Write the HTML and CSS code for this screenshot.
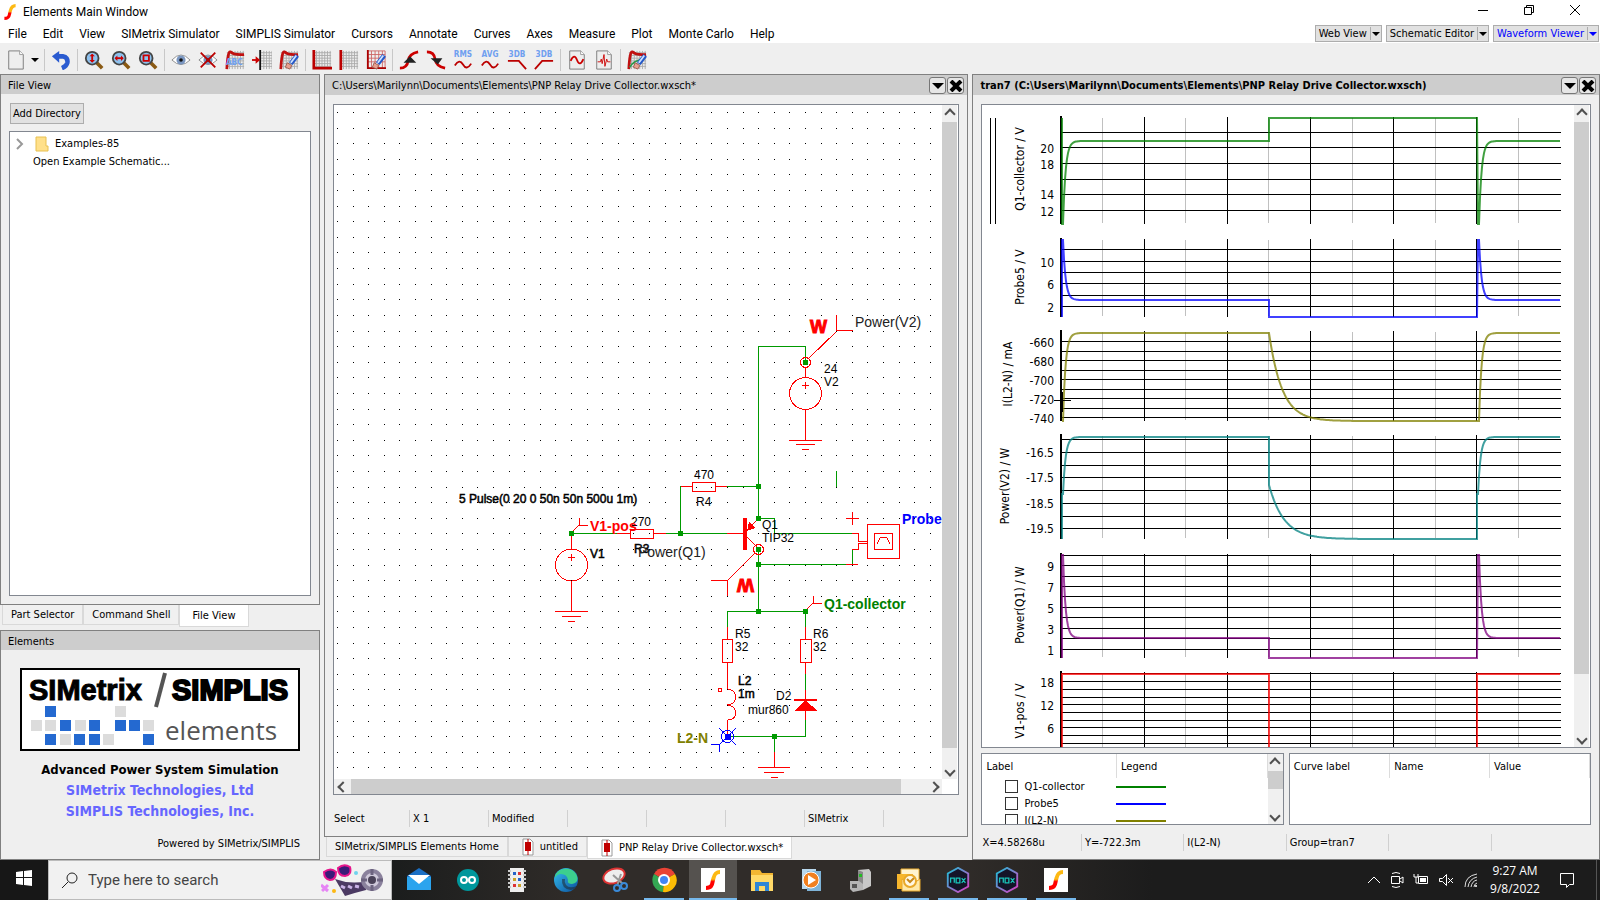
FILE: index.html
```html
<!DOCTYPE html>
<html lang="en">
<head>
    <meta charset="utf-8">
    <title>Elements Main Window</title>
    <link rel="stylesheet" href="styles.css">
</head>
<body>
    <svg class="defs" width="0" height="0" aria-hidden="true">
        <defs>
            <linearGradient id="flame" x1="0" y1="0" x2="0" y2="1">
                <stop offset="0.45" stop-color="#fdb913"/>
                <stop offset="0.6" stop-color="#f00"/>
            </linearGradient>
            <linearGradient id="edge-blue" x1="0" y1="0" x2="1" y2="1">
                <stop offset="0" stop-color="#35c1f1"/>
                <stop offset="1" stop-color="#0b4f9c"/>
            </linearGradient>
            <linearGradient id="nox-line" x1="0" y1="0" x2="1" y2="1">
                <stop offset="0" stop-color="#19c3d8"/>
                <stop offset="1" stop-color="#e23cc3"/>
            </linearGradient>
            <symbol id="swoosh" viewBox="0 0 20 20">
                <path d="M3 18C10 18 9 13 10 10S11 2 17 2" fill="none" stroke="url(#flame)" stroke-width="4"/>
            </symbol>
            <symbol id="page" viewBox="0 0 22 22">
                <path d="M3 1h12l4 4v16H3z" fill="#eee" stroke="#777"/>
                <path d="M15 1v4h4" fill="#fff" stroke="#999"/>
            </symbol>
            <symbol id="lens" viewBox="0 0 22 22">
                <path d="M14 14l6 6" stroke="#8a5a14" stroke-width="4"/>
                <circle cx="9" cy="9" r="7" fill="#8ec2ee" stroke="#444" stroke-width="2"/>
            </symbol>
            <symbol id="mesh" viewBox="0 0 22 22">
                <path d="M2 3h19M2 6h19M2 9h19M2 12h19M2 15h19M2 18h19M5 1v20M8 1v20M11 1v20M14 1v20M17 1v20M20 1v20" stroke="#aaa" fill="none"/>
            </symbol>
            <symbol id="eraser" viewBox="0 0 22 22">
                <path d="M20 6l-7 9" stroke="#2458c8" stroke-width="5"/>
                <path d="M19 6l-6 8" stroke="#cfe2ff" stroke-width="2"/>
                <path d="M9 14l5 3-2 4-5-2z" fill="#e8a090" stroke="#9b5a4c"/>
            </symbol>
            <symbol id="eye" viewBox="0 0 22 22">
                <path d="M1 11Q11 0 21 11Q11 21 1 11z" fill="#fff" stroke="#888"/>
                <circle cx="11" cy="11" r="5" fill="#7a96c0"/>
                <circle cx="11" cy="11" r="2" fill="#111"/>
            </symbol>
            <symbol id="doc" viewBox="0 0 12 18">
                <path d="M1 1h7l3 3v13H1z" fill="#fff" stroke="#999"/>
                <path d="M6 1v16" stroke="#c00000"/>
                <path d="M3 4h6v9H3z" fill="#c00000"/>
            </symbol>
            <symbol id="nox" viewBox="0 0 26 28">
                <path d="M13 1l11 6v14l-11 6-11-6V7z" fill="#141428" stroke="url(#nox-line)" stroke-width="2"/>
                <path d="M5 17v-5h4v5M11 12h4v5h-4zM17 12l4 5M21 12l-4 5" fill="none" stroke="#19c3b8" stroke-width="1.4"/>
            </symbol>
        </defs>
    </svg>

    <header class="titlebar">
        <svg class="app-icon"><use href="#swoosh"/></svg>
        <h1>Elements Main Window</h1>
        <div class="window-buttons">
            <button aria-label="Minimize"><svg width="12" height="12"><path d="M1 6.5h10" stroke="#000"/></svg></button>
            <button aria-label="Restore"><svg width="12" height="12"><path d="M1.5 3.5h7v7h-7zM3.5 3V1.5h7v7H9" fill="none" stroke="#000"/></svg></button>
            <button aria-label="Close"><svg width="12" height="12"><path d="M1 1l10 10M11 1L1 11" stroke="#000"/></svg></button>
        </div>
    </header>

    <nav class="menubar">
        <button>File</button><button>Edit</button><button>View</button><button>SIMetrix Simulator</button><button>SIMPLIS Simulator</button><button>Cursors</button><button>Annotate</button><button>Curves</button><button>Axes</button><button>Measure</button><button>Plot</button><button>Monte Carlo</button><button>Help</button>
        <div class="modes">
            <button class="mode">Web View<i></i></button>
            <button class="mode">Schematic Editor<i></i></button>
            <button class="mode current">Waveform Viewer<i></i></button>
        </div>
    </nav>

    <div class="toolbar">
        <button aria-label="New"><svg><use href="#page"/></svg></button>
        <button class="more" aria-label="New options"><i></i></button>
        <hr>
        <button aria-label="Undo"><svg viewBox="0 0 22 22"><path d="M7 7h6q6 1 5 7q-1 4-6 6" fill="none" stroke="#2a5bd0" stroke-width="5"/><path d="M1 7l8-6v13z" fill="#2a5bd0"/></svg></button>
        <hr>
        <button aria-label="Zoom vertical"><svg viewBox="0 0 22 22"><use href="#lens"/><path d="M9 5v8" stroke="#c00" stroke-width="2"/><path d="M6 7l3-3 3 3zM6 11l3 3 3-3z" fill="#c00"/></svg></button>
        <button aria-label="Zoom horizontal"><svg viewBox="0 0 22 22"><use href="#lens"/><path d="M5 9h8" stroke="#c00" stroke-width="2"/><path d="M7 6l-3 3 3 3zM11 6l3 3-3 3z" fill="#c00"/></svg></button>
        <button aria-label="Zoom box"><svg viewBox="0 0 22 22"><use href="#lens"/><path d="M6 6h6v6H6z" fill="none" stroke="#c00" stroke-width="2"/></svg></button>
        <hr>
        <button aria-label="Show curve"><svg><use href="#eye"/></svg></button>
        <button aria-label="Hide curve"><svg viewBox="0 0 22 22"><use href="#eye"/><path d="M3 3l16 16M19 3L3 19" stroke="#b00" stroke-width="2"/></svg></button>
        <button aria-label="Name curve"><svg viewBox="0 0 22 22"><use href="#mesh"/><path d="M2 21Q3 1 6 2Q10 6 21 5" fill="none" stroke="#c01010" stroke-width="3"/><text class="abc" x="1" y="17">ABC</text></svg></button>
        <button aria-label="Move axis"><svg viewBox="0 0 22 22"><g transform="translate(8 0)"><use href="#mesh" width="22" height="22"/></g><path d="M9 0v22" stroke="#111" stroke-width="2"/><path d="M0 11h5" stroke="#c00" stroke-width="2"/><path d="M4 7l5 4-5 4z" fill="#c00"/></svg></button>
        <button aria-label="Erase curve"><svg viewBox="0 0 22 22"><use href="#mesh"/><path d="M2 21Q3 1 6 2Q10 6 21 5" fill="none" stroke="#c01010" stroke-width="3"/><use href="#eraser"/></svg></button>
        <hr>
        <button aria-label="New axis"><svg viewBox="0 0 22 22"><use href="#mesh"/><path d="M2 0v20h20" fill="none" stroke="#b00" stroke-width="3"/></svg></button>
        <button aria-label="New grid"><svg viewBox="0 0 22 22"><use href="#mesh"/><path d="M2 0v22" stroke="#b00" stroke-width="3"/></svg></button>
        <button aria-label="Erase axis"><svg viewBox="0 0 22 22"><path d="M2 1h19v19H2zM2 5h19M2 9h19M2 13h19M6 1v19M10 1v19M14 1v19M18 1v19" fill="none" stroke="#c66"/><path d="M2 0v20h20" fill="none" stroke="#a00" stroke-width="2"/><use href="#eraser"/></svg></button>
        <hr>
        <button aria-label="Rise time"><svg viewBox="0 0 22 22"><path d="M1 20q8 0 9-8t11-10" fill="none" stroke="#c00" stroke-width="3"/><path d="M5 14h14l-7-7z" fill="#222"/></svg></button>
        <button aria-label="Fall time"><svg viewBox="0 0 22 22"><path d="M1 2q8 0 9 8t11 10" fill="none" stroke="#c00" stroke-width="3"/><path d="M5 9h13l-5 7z" fill="#222"/></svg></button>
        <button aria-label="RMS"><svg viewBox="0 0 22 22"><text class="stat" x="11" y="8">RMS</text><path d="M2 17q5-8 9-1t9-1" fill="none" stroke="#b00" stroke-width="2"/></svg></button>
        <button aria-label="Average"><svg viewBox="0 0 22 22"><text class="stat" x="11" y="8">AVG</text><path d="M2 17q5-8 9-1t9-1" fill="none" stroke="#b00" stroke-width="2"/></svg></button>
        <button aria-label="Low pass 3dB"><svg viewBox="0 0 22 22"><text class="stat" x="11" y="8">3DB</text><path d="M1 12h12l8 9" fill="none" stroke="#b00" stroke-width="2"/></svg></button>
        <button aria-label="High pass 3dB"><svg viewBox="0 0 22 22"><text class="stat" x="11" y="8">3DB</text><path d="M1 21l8-9h12" fill="none" stroke="#b00" stroke-width="2"/></svg></button>
        <hr>
        <button aria-label="Transient plot"><svg viewBox="0 0 22 22"><use href="#page"/><path d="M4 12q4-9 7-1t7-1" fill="none" stroke="#c00" stroke-width="2"/></svg></button>
        <button aria-label="Spectrum plot"><svg viewBox="0 0 22 22"><use href="#page"/><path d="M4 13h3l1-3 1 5 2-10 1 13 2-8 1 3h3" fill="none" stroke="#c00"/></svg></button>
        <hr>
        <button aria-label="Erase all"><svg viewBox="0 0 22 22"><use href="#mesh"/><path d="M2 21Q3 1 6 2Q10 6 21 5" fill="none" stroke="#c01010" stroke-width="3"/><path d="M3 19q4-8 16-9" fill="none" stroke="#2a9a4a" stroke-width="2"/><use href="#eraser"/></svg></button>
    </div>

    <main class="workspace">
        <aside class="dock">
            <section class="panel files">
                <h2 class="panel-head">File View</h2>
                <div class="panel-body">
                    <button class="add">Add Directory</button>
                    <ul class="tree">
                        <li><svg width="8" height="12"><path d="M1 1l5 5-5 5" fill="none" stroke="#999" stroke-width="2"/></svg><svg class="folder" width="14" height="16"><path d="M1 1h10v9h2v5H1z" fill="#ffe08a" stroke="#e8c050"/></svg>Examples-85</li>
                        <li class="leaf">Open Example Schematic...</li>
                    </ul>
                </div>
            </section>
            <div class="tabs">
                <button>Part Selector</button><button>Command Shell</button><button class="active">File View</button>
            </div>
            <section class="panel about">
                <h2 class="panel-head">Elements</h2>
                <div class="about-body">
                    <svg class="logo" viewBox="0 0 280 83">
                        <path d="M1 1h278v81H1z" fill="#fff" stroke="#000" stroke-width="2"/>
                        <text class="brand" x="9" y="32">SIMetrix</text>
                        <path d="M136 39l9-34" stroke="#555" stroke-width="4"/>
                        <text class="brand heavy" x="152" y="32">SIMPLIS</text>
                        <path class="tile" d="M95 38h11v11h-11zM11 52h11v11h-11zM25 52h11v11h-11zM55 52h11v11h-11zM123 52h11v11h-11zM40 66h11v11h-11zM83 66h11v11h-11z"/>
                        <path class="tile blue" d="M25 38h11v11h-11zM40 52h11v11h-11zM69 52h11v11h-11zM95 52h11v11h-11zM109 52h11v11h-11zM25 66h11v11h-11zM54 66h11v11h-11zM69 66h11v11h-11zM123 66h11v11h-11z"/>
                        <text class="sub" x="145" y="72">elements</text>
                    </svg>
                    <p class="tagline">Advanced Power System Simulation</p>
                    <p class="tagline"><a href="#">SIMetrix Technologies, Ltd</a></p>
                    <p class="tagline"><a href="#">SIMPLIS Technologies, Inc.</a></p>
                    <p class="powered">Powered by SIMetrix/SIMPLIS</p>
                </div>
            </section>
        </aside>

        <section class="editor">
            <div class="panel">
                <div class="panel-head tall">
                    <h2>C:\Users\Marilynn\Documents\Elements\PNP Relay Drive Collector.wxsch*</h2>
                    <button aria-label="Window menu"><svg width="14" height="12"><path d="M1 3h12l-6 6z"/></svg></button>
                    <button aria-label="Close"><svg width="14" height="12"><path d="M2 1l10 10M12 1L2 11" stroke="#000" stroke-width="4"/></svg></button>
                </div>
                <div class="panel-body">
                    <div class="sheet">
                        <svg class="schematic">
                            <g transform="translate(-334 -105)">
                                <path id="dots" class="crisp" stroke="#000"/>
                                <g class="wire">
                                    <path d="M758.5 518V346.5H805.5V362M836.5 471V487M727 486.5H758M680.5 533V486M571 533.5H620M666 533.5H727M758 518.5H774.5V533.5H852M852.5 549V564M758 564.5H846M758.5 549V611M727.5 627V611.5H805.5V627M805.5 674V690M805.5 720V736.5H727M774.5 736V752"/>
                                </g>
                                <g class="part">
                                    <!-- V2 and its power probe -->
                                    <path d="M809 358L836 332M836.5 315V330.5H853M805.5 367V377M802 385.5H809M805.5 382V389M805.5 409V440M789 440.5H822M796 444.5H815M802 449.5H809"/>
                                    <circle cx="805.5" cy="362.5" r="5"/>
                                    <circle cx="805.5" cy="393.5" r="16"/>
                                    <!-- R4, R3 -->
                                    <path d="M681 486.5H692M715 486.5H727M692.5 482.5H715.5V491.5H692.5zM617 533.5H630M653 533.5H666M630.5 529.5H653.5V538.5H630.5z"/>
                                    <!-- V1 -->
                                    <path d="M571 533L579 525M579.5 518V525.5H588M571.5 533V549M568 557.5H575M571.5 554V561M571.5 581V611M555 611.5H588M562 616.5H581M568 621.5H575"/>
                                    <circle cx="571.5" cy="565" r="16"/>
                                    <!-- Q1 -->
                                    <path d="M727 533.5H743M747 530L758 519M747 537L757 547M755 553L728 580M711 580.5H727.5V596"/>
                                    <path class="solid" d="M743 518h4v32h-4zM747 531l2-9 6 6z"/>
                                    <circle cx="758.5" cy="549.5" r="5"/>
                                    <!-- differential probe -->
                                    <path d="M846 518.5H859M852.5 512V525M852 533.5H858.5V541.5H867M867 543.5H858.5V549.5H852M846 564.5H858M867.5 524.5H899.5V558.5H867.5zM874.5 533.5H892.5V549.5H874.5zM877 544l3-6 2-1h3l2 1 3 6"/>
                                    <!-- R5, R6, L2, D2 -->
                                    <path d="M805 611L813 603M813.5 596V603.5H822M727.5 627V639M722.5 639.5H732.5V662.5H722.5zM727.5 662V689q8 1 8 8t-8 8q8 1 8 8t-8 7V736M805.5 627V639M800.5 639.5H811.5V662.5H800.5zM805.5 662V674M805.5 690V700M805.5 710V720"/>
                                    <circle cx="720" cy="690" r="2"/>
                                    <path class="solid" d="M794 699h23v2h-11l11 9v1h-22v-1l9-9h-10z"/>
                                    <path d="M774.5 752V767M758 767.5H790M764 772.5H784M771 777.5H778"/>
                                </g>
                                <path class="node" d="M803 360h5v5h-5zM756 484h5v5h-5zM756 516h5v5h-5zM756 547h5v5h-5zM756 562h5v5h-5zM756 609h5v5h-5zM678 531h5v5h-5zM569 531h5v5h-5zM803 609h5v5h-5zM772 734h5v5h-5z"/>
                                <g class="cursor">
                                    <circle cx="727.5" cy="736.5" r="6"/>
                                    <path d="M719 728L736 745M736 728L720 744M711 744.5H719.5V752"/>
                                    <path d="M725 734h5v5h-5z" fill="#00f"/>
                                </g>
                                <text class="watt" x="810" y="333">W</text>
                                <text class="watt" transform="translate(754 579) rotate(180)">W</text>
                                <g class="value">
                                    <text x="824" y="373">24</text><text x="824" y="386">V2</text>
                                    <text x="694" y="479">470</text><text x="696" y="506">R4</text>
                                    <text x="631" y="526">270</text>
                                    <text x="762" y="529">Q1</text><text x="762" y="542">TIP32</text>
                                    <text x="735" y="638">R5</text><text x="735" y="651">32</text>
                                    <text x="813" y="638">R6</text><text x="813" y="651">32</text>
                                    <text x="776" y="700">D2</text><text x="748" y="714">mur860</text>
                                </g>
                                <g class="value dark">
                                    <text x="459" y="503">5 Pulse(0 20 0 50n 50n 500u 1m)</text>
                                    <text x="590" y="558">V1</text><text x="634" y="553">R3</text>
                                    <text x="738" y="685">L2</text><text x="738" y="698">1m</text>
                                </g>
                                <g class="net">
                                    <text x="855" y="327">Power(V2)</text><text x="638" y="557">Power(Q1)</text>
                                    <text class="strong red" x="590" y="531">V1-pos</text>
                                    <text class="strong blue" x="902" y="524">Probe5</text>
                                    <text class="strong green" x="824" y="609">Q1-collector</text>
                                    <text class="strong olive" x="677" y="743">L2-N</text>
                                </g>
                            </g>
                        </svg>
                        <div class="scroll v"><b class="up"></b><span class="thumb"></span><b class="down"></b></div>
                        <div class="scroll h"><b class="left"></b><span class="thumb"></span><b class="right"></b></div>
                    </div>
                    <div class="status"><span>Select</span><span>X 1</span><span>Modified</span><span></span><span></span><span></span><span>SIMetrix</span><span></span></div>
                </div>
            </div>
            <div class="tabs docs">
                <button>SIMetrix/SIMPLIS Elements Home</button><button><svg class="doc"><use href="#doc"/></svg>untitled</button><button class="active"><svg class="doc"><use href="#doc"/></svg>PNP Relay Drive Collector.wxsch*</button>
            </div>
        </section>

        <section class="viewer panel">
            <div class="panel-head tall strong-head">
                <h2>tran7 (C:\Users\Marilynn\Documents\Elements\PNP Relay Drive Collector.wxsch)</h2>
                <button aria-label="Window menu"><svg width="14" height="12"><path d="M1 3h12l-6 6z"/></svg></button>
                <button aria-label="Close"><svg width="14" height="12"><path d="M2 1l10 10M12 1L2 11" stroke="#000" stroke-width="4"/></svg></button>
            </div>
            <div class="panel-body">
                <div class="graph">
                    <svg class="plots"><g id="plots" transform="translate(-982 -105)"></g></svg>
                    <div class="scroll v"><b class="up"></b><span class="thumb"></span><b class="down"></b></div>
                </div>
                <div class="lists">
                    <div class="list curves">
                        <table>
                            <thead><tr><th>Label</th><th>Legend</th></tr></thead>
                            <tbody>
                                <tr><td><label><input type="checkbox">Q1-collector</label></td><td><hr class="green-line"></td></tr>
                                <tr><td><label><input type="checkbox">Probe5</label></td><td><hr class="blue-line"></td></tr>
                                <tr><td><label><input type="checkbox">I(L2-N)</label></td><td><hr class="olive-line"></td></tr>
                            </tbody>
                        </table>
                        <div class="scroll v"><b class="up"></b><span class="thumb"></span><b class="down"></b></div>
                    </div>
                    <div class="list">
                        <table class="measures">
                            <thead><tr><th>Curve label</th><th>Name</th><th>Value</th></tr></thead>
                        </table>
                    </div>
                </div>
                <div class="status wide"><span>X=4.58268u</span><span>Y=-722.3m</span><span>I(L2-N)</span><span>Group=tran7</span><span></span><span></span></div>
            </div>
        </section>
    </main>

    <footer class="taskbar">
        <button class="start" aria-label="Start"><svg width="16" height="16"><path d="M0 2l7-1v6H0zM8 1l8-1v7H8zM0 8h7v7l-7-1zM8 8h8v8l-8-1z" fill="#fff"/></svg></button>
        <div class="search">
            <svg width="18" height="18"><circle cx="11" cy="7" r="5" fill="none" stroke="#222"/><path d="M7 11l-6 6" stroke="#222"/></svg>
            <input type="text" placeholder="Type here to search" aria-label="Search">
            <svg width="62" height="32" viewBox="0 0 62 32">
                <path d="M14 15q16 6 32 2l-1 9q-12 3-21 6z" fill="#4b3a63"/>
                <path d="M20 22l4 2M27 22l4 2M34 22l4 1" stroke="#c9b3e6" stroke-width="3"/>
                <circle cx="51" cy="16" r="11" fill="#8a819c"/><circle cx="51" cy="16" r="7" fill="#cfc9da"/><circle cx="51" cy="16" r="4" fill="#4a4258"/>
                <path d="M51 5v6M51 21v6M40 16h6M56 16h6" stroke="#6d6480" stroke-width="3"/>
                <path d="M3 8q7-5 12 0 0 8-6 8-6-1-6-8zM17 4q6-5 12-1 2 8-5 9-7 0-7-8z" fill="#3a1b78" stroke="#e6168c" stroke-width="2"/>
                <path d="M0 21l7 6M7 21l-6 6" stroke="#e685f5" stroke-width="3"/><circle cx="13" cy="27" r="2" fill="#fdb913"/><circle cx="35" cy="9" r="2" fill="#6fd3ee"/>
            </svg>
        </div>
        <nav class="apps">
            <button aria-label="Mail"><svg viewBox="0 0 26 26"><path d="M1 9l12-8 12 8v14H1z" fill="#1a6fc4"/><path d="M1 10h24v13H1z" fill="#2ba4ee"/><path d="M2 8h22L13 17z" fill="#fff"/></svg></button>
            <button aria-label="Arduino"><svg viewBox="0 0 26 26"><circle cx="13" cy="13" r="11" fill="#00979c"/><circle cx="9" cy="13" r="3" fill="none" stroke="#fff" stroke-width="2"/><circle cx="17" cy="13" r="3" fill="none" stroke="#fff" stroke-width="2"/></svg></button>
            <button aria-label="Notes"><svg viewBox="0 0 26 26"><path d="M6 1h14v24H6z" fill="#eee"/><path d="M4 4h3M4 8h3M4 12h3M4 16h3M4 20h3M19 4h3M19 8h3M19 12h3M19 16h3M19 20h3" stroke="#ccc" stroke-width="2"/><path d="M9 5h3v3H9zM14 11h3v3h-3z" fill="#2563c8"/><path d="M14 5h3v3h-3zM9 17h3v3H9z" fill="#d33"/><path d="M9 11h3v3H9zM14 17h3v3h-3z" fill="#c9a227"/></svg></button>
            <button aria-label="Edge"><svg viewBox="0 0 26 26"><circle cx="13" cy="13" r="12" fill="url(#edge-blue)"/><path d="M2 9C6 0 20-1 24 9q2 7-5 8-5 0-4-4-1-6-7-6-4 0-6 4z" fill="#3ccf8e"/><path d="M9 12q-1 10 9 11 4-1 6-4-8 3-11-1-2-3-1-6z" fill="#1f1f1f" opacity=".5"/></svg></button>
            <button aria-label="Snip"><svg viewBox="0 0 26 26"><ellipse cx="12" cy="9" rx="11" ry="7" fill="#eee" stroke="#d33" stroke-width="2" transform="rotate(-20 12 9)"/><path d="M11 8l10 9M19 7l-4 12" stroke="#999" stroke-width="2"/><circle cx="15" cy="21" r="3" fill="none" stroke="#3a8ad8" stroke-width="2"/><circle cx="22" cy="19" r="3" fill="none" stroke="#3a8ad8" stroke-width="2"/></svg></button>
            <button class="open" aria-label="Chrome"><svg viewBox="0 0 26 26"><path d="M13 13L3 7A12 12 0 0 1 24 7z" fill="#ea4335"/><path d="M13 13l-1 12A12 12 0 0 1 3 7z" fill="#34a853"/><path d="M13 13l11-6a12 12 0 0 1-12 18z" fill="#fbbc05"/><circle cx="13" cy="13" r="6" fill="#fff"/><circle cx="13" cy="13" r="4" fill="#4285f4"/></svg></button>
            <button class="open active" aria-label="SIMetrix"><svg viewBox="0 0 26 26"><path d="M1 1h24v24H1z" fill="#fff"/><use href="#swoosh" x="3" y="1" width="20" height="24"/></svg></button>
            <button aria-label="Explorer"><svg viewBox="0 0 26 26"><path d="M2 3h9l2 3h11v18H2z" fill="#f2b632"/><path d="M2 8h22v16H2z" fill="#ffd968"/><path d="M6 24v-9h14v9h-4v-5h-6v5z" fill="#2f86d6"/></svg></button>
            <button aria-label="Media player"><svg viewBox="0 0 26 26"><path d="M4 2h14v20H4z" fill="#b9d9ee"/><path d="M9 4h14v20H9z" fill="#7fb4d8"/><circle cx="13" cy="13" r="8" fill="#f08020" stroke="#fff"/><path d="M10 8l8 5-8 5z" fill="#fff"/></svg></button>
            <button aria-label="Device"><svg viewBox="0 0 26 26"><path d="M11 3l11-1 2 3v14l-8 4-5-4z" fill="#c8c8c8"/><path d="M11 3l5 2v17l-5-3z" fill="#888"/><path d="M3 14h9l4 3v6l-10 2-3-3z" fill="#b5b5b5"/><path d="M12 7h3v3h-3z" fill="#2b2"/><path d="M5 17h5v4H5z" fill="#555"/></svg></button>
            <button class="open" aria-label="Outlook"><svg viewBox="0 0 26 26"><path d="M5 2h18v12H5z" fill="#fff3d0" stroke="#f0b030"/><path d="M1 7h16v15H1z" fill="#f7b62c"/><path d="M6 12l9 6 9-6v12H6z" fill="#ffe9a8" stroke="#e8a82a"/><circle cx="14" cy="14" r="6" fill="#fff8e4" stroke="#e8a82a" stroke-width="2"/><path d="M11 12l3 3 4-4" fill="none" stroke="#c8891a" stroke-width="2"/></svg></button>
            <button class="open" aria-label="Nox"><svg><use href="#nox"/></svg></button>
            <button class="open" aria-label="Nox player"><svg><use href="#nox"/></svg></button>
            <button class="open" aria-label="Elements"><svg viewBox="0 0 26 26"><path d="M1 1h24v24H1z" fill="#fff"/><use href="#swoosh" x="3" y="1" width="20" height="24"/></svg></button>
        </nav>
        <div class="tray">
            <svg width="14" height="16"><path d="M1 11l6-6 6 6" fill="none" stroke="#fff"/></svg>
            <svg width="14" height="16"><path d="M1.5 4.5h8v7h-8zM10 7l3-2v6l-3-2M2 1.500q4-2 8 0M2 14.500q4 2 8 0" fill="none" stroke="#fff"/></svg>
            <svg width="16" height="16"><path d="M5.500 4.500h9v7h-9z" fill="none" stroke="#fff"/><path d="M7 6h6v4H7z" fill="#fff"/><path d="M1 2v3h4V2M3 5v6h2" fill="none" stroke="#fff"/></svg>
            <svg width="16" height="16"><path d="M1.500 6.500h3l4-4v11l-4-4h-3zM10 6l5 5M15 6l-5 5" fill="none" stroke="#fff"/></svg>
            <svg width="16" height="16"><path d="M2 15Q2 4 14 2M5 15Q6 7 14 5M8 15Q9 9 14 8M11 15q0-3 3-4" fill="none" stroke="#ddd"/><circle cx="13" cy="14" r="1" fill="#fff"/></svg>
            <p class="clock">9:27 AM<br>9/8/2022</p>
            <svg width="16" height="17"><path d="M1.500 1.500h13v11h-4l-3 3v-3h-6z" fill="none" stroke="#fff"/></svg>
        </div>
    </footer>
    <script src="script.js"></script>
</body>
</html>
```

FILE: styles.css
```css
* {
    box-sizing: border-box;
}

body {
    margin: 0;
    height: 100vh;
    display: flex;
    flex-direction: column;
    overflow: hidden;
    background: #efefef;
    color: #000;
    font: 11px/14px "DejaVu Sans Condensed", "DejaVu Sans", Tahoma, sans-serif;
}

h1,
h2,
p,
ul {
    margin: 0;
    padding: 0;
    font-size: inherit;
    font-weight: normal;
}

button {
    padding: 0;
    border: 0;
    background: none;
    color: inherit;
    font: inherit;
}

.defs {
    position: absolute;
}

/* title and menus */
.titlebar {
    display: flex;
    align-items: center;
    height: 24px;
    background: #fff;
    font: 12px/16px Roboto, sans-serif;
}

.app-icon {
    width: 16px;
    height: 20px;
    margin: 0 5px 0 2px;
}

.window-buttons {
    display: flex;
    margin: 0 2px 0 auto;
}

.window-buttons button {
    width: 46px;
    height: 20px;
}

.menubar {
    display: flex;
    align-items: center;
    height: 19px;
    background: #fff;
    font: 12px/16px Roboto, sans-serif;
}

.menubar > button {
    padding: 0 8px;
}

.modes {
    display: flex;
    gap: 4px;
    margin: 0 1px 0 auto;
    font: 11px/14px "DejaVu Sans Condensed", sans-serif;
}

.mode {
    display: flex;
    align-items: center;
    height: 17px;
    padding-left: 3px;
    border: 1px solid #adadad;
    background: #e1e1e1;
}

.mode i {
    width: 11px;
    height: 13px;
    margin-left: 3px;
    border-left: 1px solid #adadad;
    display: flex;
    align-items: center;
    justify-content: center;
}

.mode i::after,
.more i::after {
    content: "";
    display: block;
    border: 4px solid transparent;
    border-top-color: currentColor;
    border-bottom: 0;
}

.current {
    color: #00f;
}

.toolbar {
    display: flex;
    align-items: center;
    height: 31px;
    padding: 2px 0 0 2px;
}

.toolbar button {
    width: 27px;
    height: 24px;
    display: flex;
    align-items: center;
    justify-content: center;
}

.toolbar .more {
    width: 12px;
}

.toolbar svg {
    width: 20px;
    height: 20px;
}

.toolbar hr {
    width: 1px;
    height: 22px;
    margin: 0 2px 0 3px;
    border: 0;
    background: #c8c8c8;
}

.abc {
    font: bold 9px "DejaVu Sans Condensed", sans-serif;
    fill: #6fa0f0;
}

.stat {
    font: bold 9px "DejaVu Sans Condensed", sans-serif;
    fill: #6fa0f0;
    text-anchor: middle;
}

.toolbar svg:has(.stat) {
    overflow: visible;
}

/* docks */
.workspace {
    flex: 1;
    min-height: 0;
    display: grid;
    grid-template-columns: 320px 645fr 628fr;
    gap: 4px;
}

.dock,
.editor {
    display: flex;
    flex-direction: column;
    min-width: 0;
    min-height: 0;
}

.panel {
    flex: 1;
    display: flex;
    flex-direction: column;
    min-width: 0;
    min-height: 0;
    border: 1px solid #808080;
}

.panel-head {
    display: flex;
    align-items: center;
    height: 19px;
    padding: 2px 0 0 7px;
    background: #cdcdcd;
}

.panel-head.tall {
    height: 20px;
    padding: 1px 3px 0 7px;
}

.panel-head h2 {
    flex: 1;
    white-space: nowrap;
}

.strong-head h2 {
    font-weight: bold;
}

.panel-head button {
    display: flex;
    align-items: center;
    justify-content: center;
    width: 17px;
    height: 17px;
    margin-left: 1px;
    border: 1px solid #777;
    border-radius: 3px;
    background: #e6e6e6;
}

.panel-body {
    flex: 1;
    display: flex;
    flex-direction: column;
    min-height: 0;
    padding: 9px 8px 8px;
}

.add {
    align-self: flex-start;
    height: 21px;
    margin-left: 1px;
    padding: 1px 2px 0;
    border: 1px solid #adadad;
    background: #e1e1e1;
}

.tree {
    flex: 1;
    margin-top: 7px;
    padding: 3px 0;
    border: 1px solid #828790;
    background: #fff;
    list-style: none;
}

.tree li {
    display: flex;
    align-items: center;
    height: 18px;
    padding-left: 6px;
}

.tree .leaf {
    padding-left: 23px;
}

.folder {
    margin: 0 6px 0 11px;
}

.tabs {
    display: flex;
    height: 25px;
    padding-left: 2px;
}

.tabs button {
    display: flex;
    align-items: center;
    height: 20px;
    padding: 1px 8px 0;
    border: 1px solid #d9d9d9;
    border-top: 0;
    background: #f0f0f0;
}

.tabs .active {
    height: 22px;
    padding: 1px 12px 0;
    background: #fff;
}

.docs {
    height: 23px;
}

.doc {
    width: 12px;
    height: 18px;
    margin: 0 6px 0 5px;
}

.docs .active {
    padding: 1px 8px 0;
}

.about {
    flex: none;
    height: 230px;
}

.about-body {
    flex: 1;
    display: flex;
    flex-direction: column;
    padding: 18px 19px 8px;
}

.logo {
    width: 100%;
    margin-bottom: 9px;
}

.brand {
    font: bold 29px "Liberation Sans", sans-serif;
    stroke: #000;
    stroke-width: 1;
}

.heavy {
    stroke-width: 2;
}

.sub {
    font: 26px "Open Sans", sans-serif;
    fill: #555;
}

.tile {
    fill: #dcdcdc;
}

.tile.blue {
    fill: #2469d0;
}

.tagline {
    font: bold 13px/20px "DejaVu Sans Condensed", sans-serif;
    text-align: center;
    white-space: nowrap;
}

.tagline a {
    color: #66f;
    font-size: 14px;
    text-decoration: none;
}

.powered {
    margin-top: auto;
    text-align: right;
}

/* scrollbars */
.scroll {
    display: flex;
    background: #f0f0f0;
}

.scroll.v {
    flex-direction: column;
    width: 15px;
}

.scroll.h {
    height: 15px;
}

.scroll b {
    flex: none;
    display: grid;
    place-items: center;
    width: 17px;
    height: 17px;
}

.scroll.v b {
    width: 15px;
}

.scroll.h b {
    height: 15px;
}

.scroll b::after {
    content: "";
    width: 6px;
    height: 6px;
    border: solid #505050;
    border-width: 2px 0 0 2px;
    transform: rotate(45deg);
}

.scroll .down::after {
    transform: rotate(225deg);
}

.scroll .left::after {
    transform: rotate(-45deg);
}

.scroll .right::after {
    transform: rotate(135deg);
}

.scroll .thumb {
    flex: 1;
    background: #cdcdcd;
}

.scroll .down {
    margin-top: auto;
}

/* schematic */
.sheet {
    flex: 1;
    min-height: 0;
    display: grid;
    grid-template: minmax(0, 1fr) 15px / minmax(0, 1fr) 16px;
    border: 1px solid #828790;
    background: #fff;
}

.sheet .v .thumb {
    margin-bottom: 14px;
}

.sheet .h .thumb {
    margin-right: 24px;
}

.schematic,
.plots {
    display: block;
    width: 100%;
    height: 100%;
    overflow: hidden;
}

.crisp {
    shape-rendering: crispEdges;
}

.wire,
.part,
.cursor {
    fill: none;
    stroke: #009a00;
    shape-rendering: crispEdges;
}

.part {
    stroke: #f00;
}

.cursor {
    stroke: #00f;
}

.solid {
    fill: #f00;
    stroke: none;
}

.node {
    fill: #009a00;
}

.value {
    font: 12px "Liberation Sans", Arial, sans-serif;
}

.dark {
    stroke: #000;
    stroke-width: .5;
}

.net {
    font: 14px "Liberation Sans", Arial, sans-serif;
    fill: #222;
}

.strong {
    font-weight: bold;
}

.watt {
    font: bold 18px "Liberation Sans", Arial, sans-serif;
    fill: #f00;
    stroke: #f00;
    stroke-width: 1;
}

.red {
    fill: #f00;
}

.blue {
    fill: #00f;
}

.green {
    fill: #008000;
}

.olive {
    fill: #808000;
}

.status {
    display: grid;
    grid-auto-columns: 79px;
    grid-auto-flow: column;
    align-items: center;
    height: 41px;
    margin-bottom: -8px;
    padding: 5px 0 0 1px;
}

.status span {
    height: 17px;
    line-height: 17px;
}

.status span + span {
    padding-left: 3px;
    margin-left: -4px;
    border-left: 1px solid #d0d0d0;
}

.status.wide {
    grid-auto-columns: 1fr;
    height: 34px;
    margin-right: -6px;
    padding-top: 0;
}

/* waveforms */
.graph {
    flex: 1;
    min-height: 0;
    display: flex;
    border: 1px solid #828790;
    background: #fff;
}

.plots {
    flex: 1;
    min-width: 0;
}

.graph .scroll {
    margin-right: 1px;
}

.graph .thumb {
    margin-bottom: 56px;
}

.plots text {
    font: 12px "DejaVu Sans Condensed", "DejaVu Sans", sans-serif;
    text-anchor: end;
}

.plots .axis-name {
    text-anchor: middle;
}

.trace {
    fill: none;
    stroke-width: 2;
    stroke-opacity: .75;
}

.lists {
    display: grid;
    grid-template-columns: 1fr 1fr;
    gap: 5px;
    height: 72px;
    margin-top: 5px;
}

.list {
    display: flex;
    min-width: 0;
    border: 1px solid #828790;
    background: #fff;
    overflow: hidden;
}

.list table {
    flex: 1;
    height: 24px;
    border-collapse: collapse;
    table-layout: fixed;
}

.list th {
    height: 24px;
    padding: 1px 0 0 4px;
    border-right: 1px solid #dcdcdc;
    font-weight: normal;
    text-align: left;
}

.list th:first-child {
    width: 134px;
}

.list .measures th {
    width: 33%;
}

.list td {
    height: 17px;
    padding: 0;
}

.list label {
    display: flex;
    align-items: center;
    height: 17px;
    padding-left: 23px;
}

.list input {
    appearance: none;
    width: 13px;
    height: 13px;
    margin: 0 6px 0 0;
    border: 1px solid #333;
    background: #fff;
}

.list hr {
    width: 50px;
    height: 2px;
    margin: 0;
    border: 0;
    background: #008000;
}

.list .blue-line {
    background: #00f;
}

.list .olive-line {
    background: #808000;
}

.list .thumb {
    flex: none;
    height: 18px;
}

/* taskbar */
.taskbar {
    flex: none;
    display: flex;
    height: 40px;
    background: linear-gradient(90deg, #1a1c1c 24%, #302c29 36%, #302c29 60%, #1c1c1c 72%);
    color: #fff;
    font: 12px/18px "Open Sans", sans-serif;
}

.start {
    width: 48px;
    background: #171717;
}

.search {
    display: flex;
    align-items: center;
    width: 344px;
    padding: 0 8px 0 12px;
    border: 1px solid #bbb;
    background: #f1f1f1;
}

.search input {
    flex: 1;
    min-width: 0;
    padding: 0 0 0 9px;
    border: 0;
    background: none;
    font: 15px/20px Roboto, sans-serif;
}

.search input::placeholder {
    color: #444;
}

.apps {
    display: flex;
    gap: 1px;
    margin-left: 3px;
}

.apps button {
    width: 48px;
    height: 40px;
    display: flex;
    align-items: center;
    justify-content: center;
}

.apps svg {
    width: 26px;
    height: 26px;
}

.apps .open {
    background: linear-gradient(#76b9ed, #76b9ed) bottom / 40px 2px no-repeat;
}

.apps .active {
    background: linear-gradient(#76b9ed, #76b9ed) bottom / 48px 2px no-repeat, #55524f;
}

.tray {
    display: flex;
    align-items: center;
    gap: 9px;
    margin: 0 3px 0 auto;
    padding-right: 21px;
    border-right: 1px solid #555;
}

.clock {
    width: 54px;
    margin-right: 8px;
    text-align: center;
}
```

FILE: script.js
```js
// schematic grid
var dots = "";
for (var gy = 112.6; gy < 778; gy += 15.6) {
    for (var gx = 337.5; gx < 942; gx += 15.6) {
        dots += "M" + Math.floor(gx) + " " + (Math.floor(gy) + 0.5) + "h1";
    }
}
document.getElementById("dots").setAttribute("d", dots);

// x positions of the time axis
var START = 1062, STEP = 1269, PERIOD = 1477, END = 1560;

// exponential from y0 towards y1, starting at x0
function curve(x0, x1, y0, y1, tau) {
    var d = "";
    for (var x = x0; x < x1; x += 1) {
        d += "L" + x + " " + (y1 + (y0 - y1) * Math.exp(-(x - x0) / tau)).toFixed(1);
    }
    return d + "L" + x1 + " " + y1;
}

// settle back to the high level at the start of each period
function settle(x, spike, from, level, end) {
    return "L" + x + " " + spike + "L" + (x + 1) + " " + from + curve(x + 1, end, from, level, 2.6);
}

var plots = [
    {
        name: "Q1-collector / V", nx: 1024, ny: 169, top: 117, bottom: 224, color: "#008000",
        lines: [132, 147, 163, 179, 194, 210],
        ticks: { 20: 153, 18: 169, 14: 199, 12: 216 },
        d: "M1062 118" + settle(START, 224, 224, 141, STEP) + "V118H" + PERIOD + settle(PERIOD + 1, 224, 224, 141, END)
    },
    {
        name: "Probe5 / V", nx: 1024, ny: 277, top: 239, bottom: 317, color: "#0000ff",
        lines: [249, 261, 272, 283, 295, 306],
        ticks: { 10: 267, 6: 289, 2: 312 },
        d: "M1062 317" + settle(START, 240, 240, 300, STEP) + "V317H" + PERIOD + settle(PERIOD + 1, 240, 240, 300, END)
    },
    {
        name: "I(L2-N) / mA", nx: 1012, ny: 374, top: 331, bottom: 421, color: "#808000",
        lines: [341, 351, 360, 370, 379, 389, 398, 408, 417],
        ticks: { "-660": 347, "-680": 366, "-700": 385, "-720": 404, "-740": 423 },
        d: "M1062 421" + settle(START, 421, 421, 333, STEP) + curve(STEP, PERIOD, 333, 421, 13) + settle(PERIOD + 1, 421, 421, 333, END)
    },
    {
        name: "Power(V2) / W", nx: 1009, ny: 486, top: 435, bottom: 539, color: "#008080",
        lines: [439, 452, 465, 477, 490, 503, 516, 528],
        ticks: { "-16.5": 457, "-17.5": 482, "-18.5": 508, "-19.5": 533 },
        d: "M1062 539" + settle(START, 494, 494, 437, STEP) + "V485" + curve(STEP, PERIOD, 485, 539, 15) + settle(PERIOD, 494, 494, 437, END)
    },
    {
        name: "Power(Q1) / W", nx: 1024, ny: 605, top: 554, bottom: 658, color: "#800080",
        lines: [555, 565, 576, 586, 596, 607, 617, 628, 638, 649],
        ticks: { 9: 571, 7: 592, 5: 613, 3: 634, 1: 655 },
        d: "M1062 658" + settle(START, 555, 555, 638, STEP) + "V658H" + PERIOD + settle(PERIOD + 1, 555, 555, 638, END)
    },
    {
        name: "V1-pos / V", nx: 1024, ny: 711, top: 672, bottom: 750, color: "#ff0000",
        lines: [673, 681, 689, 697, 704, 712, 720, 727, 735, 743],
        ticks: { 18: 687, 12: 710, 6: 733 },
        d: "M1062 750V674H1269V750M1477 750V674H1560"
    }
];

var svg = '<path class="crisp" stroke="#000" d="M990.5 118V224M995.5 118V224"/>';
plots.forEach(function (p) {
    var minor = "", major = "";
    [1102, 1185, 1268, 1352, 1435, 1518].forEach(function (x) {
        minor += "M" + (x + 0.5) + " " + (p.top + 1) + "V" + (p.bottom - 1);
    });
    p.lines.forEach(function (y) {
        major += "M1061 " + (y + 0.5) + "H1561";
    });
    [1144, 1227, 1310, 1393, 1476].forEach(function (x) {
        major += "M" + (x + 0.5) + " " + p.top + "V" + p.bottom;
    });
    svg += '<path class="crisp" stroke="#c0c0c0" d="' + minor + '"/>';
    svg += '<path class="crisp" stroke="#000" d="' + major + '"/>';
    svg += '<path stroke="#000" stroke-width="2" d="M1061 ' + (p.top - 1) + "V" + p.bottom + '"/>';
    svg += '<path class="trace" stroke="' + p.color + '" d="' + p.d + '"/>';
    Object.keys(p.ticks).forEach(function (t) {
        svg += '<text x="1054" y="' + p.ticks[t] + '">' + t + "</text>";
    });
    svg += '<text class="axis-name" transform="translate(' + p.nx + " " + p.ny + ') rotate(-90)">' + p.name + "</text>";
});
// measurement cursor
svg += '<path class="crisp" stroke="#000" d="M1054 400.5H1071M1062.5 392V412"/>';
document.getElementById("plots").innerHTML = svg;
```
